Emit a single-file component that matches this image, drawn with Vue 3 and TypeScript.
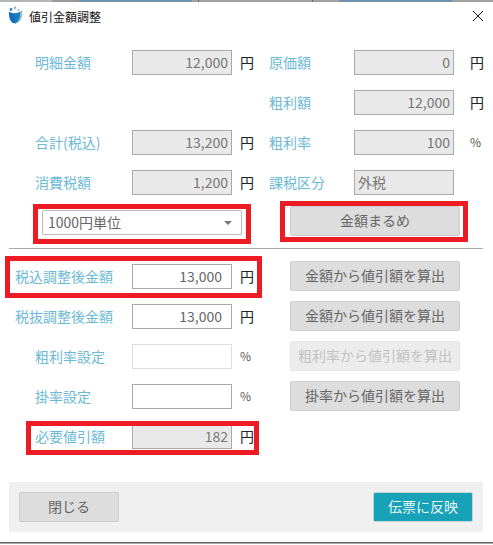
<template>
  <div class="page">
    <div class="topline">
      <span v-for="(s, i) in topSegments" :key="i" :style="{ width: s.w + 'px', background: s.c }"></span>
    </div>

    <header class="titlebar">
      <svg class="logo" width="15" height="18" viewBox="0 0 15 18">
        <path d="M1 5.500 C3 7 5 7.500 7.500 7 L7.500 17.500 C3 17.500 0.500 13 1 5.500Z" fill="#1671b8" />
        <path d="M7 7 C9 7 11 6.500 12 5.500 C13 11 11.500 16 7 17.500Z" fill="#1a7cc2" />
        <path d="M12 5 L14 4.500 C15 11 12.500 16.500 8 17.500 C11 15.500 12.800 11 12 5Z" fill="#7ccbb0" />
        <circle cx="3" cy="3.500" r="1.400" fill="#2f85c4" />
        <circle cx="7" cy="1.800" r="1.300" fill="#7ab8de" />
        <circle cx="10.500" cy="3.800" r="1.100" fill="#9acce6" />
      </svg>
      <span class="title">値引金額調整</span>
      <svg class="close" width="12" height="12" viewBox="0 0 12 12">
        <path d="M1 1 L11 11 M11 1 L1 11" stroke="#111" stroke-width="1" fill="none" />
      </svg>
    </header>

    <section class="upper">
      <div v-for="(row, i) in upperRows" :key="i" class="upper-row">
        <div class="field">
          <template v-if="row.left">
            <label class="lbl">{{ row.left.label }}</label>
            <input class="box ro" :value="row.left.value" readonly>
            <span class="unit">{{ row.left.unit }}</span>
          </template>
        </div>
        <div class="field right">
          <label class="lbl">{{ row.right.label }}</label>
          <input class="box ro" :class="{ 'text-left': row.right.textLeft }" :value="row.right.value" readonly>
          <span class="unit" :class="{ pct: row.right.unit === '%' }">{{ row.right.unit }}</span>
        </div>
      </div>

      <div class="round-row">
        <div class="select">
          <span>1000円単位</span>
          <i class="caret"></i>
        </div>
        <button class="btn round-btn">金額まるめ</button>
      </div>
    </section>

    <hr class="divider">

    <section class="lower">
      <div v-for="(row, i) in lowerRows" :key="i" class="lower-row">
        <label class="lbl" :class="{ wide: row.wide }">{{ row.label }}</label>
        <input class="box" :class="{ ro: row.readonly, faint: row.faint }" :value="row.value" :readonly="row.readonly">
        <span class="unit" :class="{ pct: row.unit === '%' }">{{ row.unit }}</span>
        <button v-if="row.action" class="btn calc-btn" :class="{ disabled: row.faint }">{{ row.action }}</button>
      </div>
    </section>

    <footer class="footer">
      <button class="btn foot-btn">閉じる</button>
      <button class="btn foot-btn primary">伝票に反映</button>
    </footer>

    <div class="bottomline"></div>

    <!-- red annotation boxes drawn over the dialog -->
    <div class="mark m-select"></div>
    <div class="mark m-round"></div>
    <div class="mark m-taxin"></div>
    <div class="mark m-need"></div>
  </div>
</template>

<script setup lang="ts">
interface Cell {
  label: string;
  value: string;
  unit: string;
  textLeft?: boolean;
}

interface UpperRow {
  left: Cell | null;
  right: Cell;
}

interface LowerRow {
  label: string;
  value: string;
  unit: string;
  wide?: boolean;
  readonly?: boolean;
  faint?: boolean;
  action?: string;
}

const topSegments = [
  { w: 52, c: '#b4b4b4' },
  { w: 27, c: '#999999' },
  { w: 113, c: '#6f93ad' },
  { w: 6, c: '#a0a0a0' },
  { w: 1, c: '#666666' },
  { w: 113, c: '#a0a0a0' },
  { w: 1, c: '#666666' },
  { w: 26, c: '#a0a0a0' },
  { w: 113, c: '#6f93ad' },
  { w: 41, c: '#a0a0a0' },
];

const upperRows: UpperRow[] = [
  {
    left: { label: '明細金額', value: '12,000', unit: '円' },
    right: { label: '原価額', value: '0', unit: '円' },
  },
  {
    left: null,
    right: { label: '粗利額', value: '12,000', unit: '円' },
  },
  {
    left: { label: '合計(税込)', value: '13,200', unit: '円' },
    right: { label: '粗利率', value: '100', unit: '%' },
  },
  {
    left: { label: '消費税額', value: '1,200', unit: '円' },
    right: { label: '課税区分', value: '外税', unit: '', textLeft: true },
  },
];

const lowerRows: LowerRow[] = [
  { label: '税込調整後金額', value: '13,000', unit: '円', wide: true, action: '金額から値引額を算出' },
  { label: '税抜調整後金額', value: '13,000', unit: '円', wide: true, action: '金額から値引額を算出' },
  { label: '粗利率設定', value: '', unit: '%', faint: true, action: '粗利率から値引額を算出' },
  { label: '掛率設定', value: '', unit: '%', action: '掛率から値引額を算出' },
  { label: '必要値引額', value: '182', unit: '円', readonly: true },
];
</script>

<style>
html, body {
  margin: 0;
  background: #fff;
}
</style>

<style scoped>
* {
  box-sizing: border-box;
}
.page {
  position: relative;
  width: 493px;
  height: 545px;
  overflow: hidden;
  background: #fff;
  font-family: "Noto Sans CJK JP", "Noto Sans", sans-serif;
  font-size: 14px;
  color: #111;
}
.topline {
  display: flex;
  height: 2px;
}
.titlebar {
  display: flex;
  align-items: center;
  height: 30px;
  padding: 0 9px 2px 8px;
}
.logo {
  margin-right: 6px;
  margin-top: -2px;
}
.title {
  font-size: 12px;
  flex: 1;
}
.upper {
  padding-top: 18px;
}
.upper-row {
  display: flex;
  height: 25px;
  margin-bottom: 15px;
}
.field {
  display: flex;
  align-items: center;
  width: 269px;
  padding-left: 35px;
}
.field .lbl {
  width: 97px;
}
.field.right {
  width: 224px;
  padding-left: 0;
}
.field.right .lbl {
  width: 85px;
}
.field.right .unit {
  margin-left: 16px;
}
.lbl {
  color: #6bb9d6;
  font-size: 14px;
  white-space: nowrap;
  margin-top: -2px;
}
.box {
  width: 100px;
  height: 25px;
  padding: 0 9px 2px 3px;
  border: 1px solid #aaa;
  background: #fff;
  color: #666;
  text-align: right;
  font-family: inherit;
  font-size: 14px;
  outline: none;
}
.box.ro {
  padding-right: 3px;
  background: #e9e9e9;
  color: #777;
}
.box.faint {
  border-color: #ddd;
}
.box.text-left {
  padding-left: 3px;
  text-align: left;
}
.unit {
  margin-left: 8px;
  margin-top: -2px;
  font-size: 14px;
  color: #222;
}
.unit.pct {
  color: #555;
  font-size: 12px;
}
.round-row {
  display: flex;
  align-items: flex-start;
  padding-left: 42px;
  margin-top: 1px;
  height: 38px;
}
.select {
  display: flex;
  align-items: center;
  justify-content: space-between;
  width: 200px;
  height: 25px;
  padding: 0 9px 2px 5px;
  border: 1px solid #bbb;
  border-radius: 2px;
  color: #666;
  font-size: 14px;
}
.caret {
  width: 0;
  height: 0;
  margin-top: 2px;
  border-left: 4px solid transparent;
  border-right: 4px solid transparent;
  border-top: 4px solid #777;
}
.btn {
  height: 30px;
  padding: 0 0 2px;
  border: 1px solid #ccc;
  border-radius: 2px;
  background: #ddd;
  color: #666;
  font-family: inherit;
  font-size: 14px;
}
.round-btn {
  width: 170px;
  margin-left: 48px;
  margin-top: -4px;
}
.divider {
  height: 1px;
  margin: 0 10px 0 9px;
  border: 0;
  background: #aaa;
}
.lower {
  padding-top: 15px;
}
.lower-row {
  position: relative;
  display: flex;
  align-items: center;
  height: 25px;
  margin-bottom: 15px;
  padding-left: 35px;
}
.lower-row .lbl {
  width: 97px;
}
.lower-row .lbl.wide {
  width: 117px;
  margin-left: -20px;
}
.calc-btn {
  position: absolute;
  left: 290px;
  top: -3px;
  width: 170px;
}
.calc-btn.disabled {
  background: #ececec;
  border-color: #e6e6e6;
  color: #c2c2c2;
}
.footer {
  display: flex;
  justify-content: space-between;
  align-items: center;
  height: 50px;
  margin: 33px 10px 0 9px;
  padding: 0 10px;
  background: #f0f0f0;
}
.foot-btn {
  width: 100px;
}
.foot-btn.primary {
  background: #17a2b8;
  border-color: #c4d4d6;
  color: #e8f6f8;
}
.bottomline {
  height: 2px;
  margin-top: 10px;
  background: #666;
  border-bottom: 1px solid #aaa;
}
.mark {
  position: absolute;
  border: 5px solid #ed1c24;
  pointer-events: none;
}
.m-select {
  left: 33px;
  top: 204px;
  width: 218px;
  height: 40px;
}
.m-round {
  left: 280px;
  top: 201px;
  width: 188px;
  height: 41px;
}
.m-taxin {
  left: 5px;
  top: 256px;
  width: 257px;
  height: 42px;
}
.m-need {
  left: 26px;
  top: 421px;
  width: 233px;
  height: 34px;
}
</style>
